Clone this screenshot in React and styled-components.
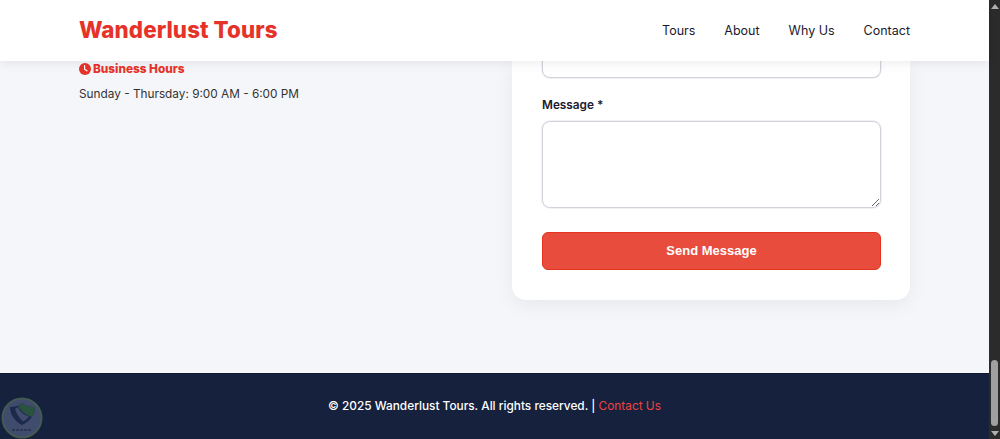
import React from 'react'
import styled, { createGlobalStyle } from 'styled-components'

const GlobalStyle = createGlobalStyle`
	html, body {
		margin: 0;
		padding: 0;
		height: 100%;
		overflow: hidden;
	}

	body {
		font-family: Inter, "Open Sans", "Liberation Sans", sans-serif;
		background: #f5f6fa;
	}

	* {
		box-sizing: border-box;
	}
`

const ClockIcon = () => (
	<svg width="12" height="12" viewBox="0 0 12 12" aria-hidden="true">
		<circle cx="6" cy="6" r="6" fill="#e63329" />
		<path d="M5.6 2.6 V6.2 L8 7.8" fill="none" stroke="#fff" strokeWidth="1.2" strokeLinecap="round" strokeLinejoin="round" />
	</svg>
)

const Badge = () => (
	<svg width="42" height="42" viewBox="0 0 42 42" aria-hidden="true">
		<circle cx="21" cy="21" r="19.5" fill="#4c5679" stroke="#4f6a55" strokeWidth="2" />
		<path d="M9 10 C14 10 18 8.5 21 6 C24 8.5 29 10 34 10 C34 18 29 24 21 28 C14 24 9 18 9 10 Z" fill="#1d2c4f" />
		<path d="M17 8.5 C19 8 20 7 21 6 C24 8.5 29 10 34 10 C34 14 33 17 31 20 C25 18 19 14 17 8.5 Z" fill="#2f5f42" />
		<path d="M14 12 C16 18 19 22 22 24.5 C25 23 27 21 28 19.5 C23 18 19 15 17 10 Z" fill="#4c5679" />
		<path d="M11 33 H31" stroke="#2f3a5a" strokeWidth="2" strokeDasharray="3 1" />
	</svg>
)

const App = () => {
	return (
		<Shell>
			<GlobalStyle />

			<Page>
				<Header>
					<Logo>Wanderlust Tours</Logo>

					<Nav>
						<NavLink>Tours</NavLink>
						<NavLink>About</NavLink>
						<NavLink>Why Us</NavLink>
						<NavLink>Contact</NavLink>
					</Nav>
				</Header>

				<Main>
					<Info>
						<InfoTitle>
							<ClockIcon />
							Business Hours
						</InfoTitle>

						<InfoText>Sunday - Thursday: 9:00 AM - 6:00 PM</InfoText>
					</Info>

					<Card>
						<ClippedInput type="text" />

						<Label>Message *</Label>
						<TextArea />

						<SendButton type="button">Send Message</SendButton>
					</Card>
				</Main>

				<Footer>
					<span>© 2025 Wanderlust Tours. All rights reserved. | </span>
					<FooterLink>Contact Us</FooterLink>

					<Watermark>
						<Badge />
					</Watermark>
				</Footer>
			</Page>

			<Scrollbar>
				<Arrow />
				<Thumb />
				<Arrow $down />
			</Scrollbar>
		</Shell>
	)
}

export default App

const Shell = styled.div`
	display: flex;
	width: 1000px;
	height: 439px;
	overflow: hidden;
`

const Page = styled.div`
	flex: 1;
	min-width: 0;
	display: flex;
	flex-direction: column;
`

const Header = styled.header`
	position: relative;
	z-index: 2;
	height: 61px;
	padding: 0 79px;
	display: flex;
	align-items: center;
	justify-content: space-between;
	background: #fff;
	box-shadow: 0 2px 10px rgba(0, 0, 0, 0.08);
`

const Logo = styled.div`
	padding-bottom: 2px;
	font-size: 22.3px;
	font-weight: 800;
	letter-spacing: 0.1px;
	color: #e63329;
`

const Nav = styled.nav`
	display: flex;
	gap: 29px;
	padding-bottom: 1px;
`

const NavLink = styled.a`
	font-size: 12.5px;
	font-weight: 400;
	color: #1a1a2e;
`

const Main = styled.main`
	flex: 1;
	padding: 0 79px;
	display: grid;
	grid-template-columns: 1fr 398px;
	align-items: start;
`

const Info = styled.div`
	display: flex;
	flex-direction: column;
	gap: 10px;
	padding-top: 1px;
`

const InfoTitle = styled.div`
	display: flex;
	align-items: center;
	gap: 2px;
	height: 14px;
	font-size: 11.8px;
	font-weight: 800;
	color: #e63329;
`

const InfoText = styled.p`
	margin: 0;
	font-size: 11.8px;
	line-height: 16px;
	color: #333;
`

const Card = styled.section`
	height: 239px;
	padding: 0 29px 0 30px;
	display: flex;
	flex-direction: column;
	background: #fff;
	border-radius: 0 0 14px 14px;
	box-shadow: 0 5px 20px rgba(0, 0, 0, 0.06);
`

const ClippedInput = styled.input`
	display: block;
	width: 100%;
	height: 17px;
	padding: 0;
	border: 1px solid #d2d3da;
	border-top: none;
	border-radius: 0 0 8px 8px;
	box-shadow: 0 0 0 1px rgba(210, 211, 220, 0.3);
	outline: none;
`

const Label = styled.label`
	margin-top: 19px;
	height: 16px;
	font-size: 11.8px;
	line-height: 16px;
	font-weight: 600;
	color: #1a1a2e;
`

const TextArea = styled.textarea`
	display: block;
	width: 100%;
	height: 87px;
	margin-top: 8px;
	border: 1px solid #d2d3da;
	border-radius: 8px;
	box-shadow: 0 0 0 1px rgba(210, 211, 220, 0.3);
	outline: none;
`

const SendButton = styled.button`
	width: 100%;
	height: 38px;
	margin-top: 24px;
	padding-bottom: 3px;
	background: #e74c3c;
	border: 1px solid #e6331f;
	border-radius: 6px;
	font-family: "Liberation Sans", Arial, sans-serif;
	font-size: 13px;
	font-weight: 700;
	color: #fff;
`

const Footer = styled.footer`
	position: relative;
	height: 66px;
	padding-bottom: 2px;
	display: flex;
	align-items: center;
	justify-content: center;
	white-space: pre;
	background: #16213e;
	border-top: 1px solid #111a30;
	font-size: 11.85px;
	font-weight: 500;
	color: #fff;
`

const FooterLink = styled.a`
	font-weight: 400;
	color: #f0433f;
`

const Watermark = styled.div`
	position: absolute;
	left: 1px;
	bottom: 0;
	height: 42px;
	opacity: 0.8;
	filter: blur(0.7px);
`

const Scrollbar = styled.div`
	width: 11px;
	flex-shrink: 0;
	display: flex;
	flex-direction: column;
	align-items: center;
	background: #2b2b2b;
`

const Arrow = styled.div`
	width: 0;
	height: 0;
	margin: ${props => (props.$down ? '5px 0 3px' : '4px 0 0')};
	border-left: 4px solid transparent;
	border-right: 4px solid transparent;
	border-bottom: ${props => (props.$down ? 'none' : '5px solid #b0b0b0')};
	border-top: ${props => (props.$down ? '5px solid #b0b0b0' : 'none')};
`

const Thumb = styled.div`
	width: 7px;
	height: 66px;
	margin-top: auto;
	border-radius: 4px;
	background: #a0a0a0;
`
